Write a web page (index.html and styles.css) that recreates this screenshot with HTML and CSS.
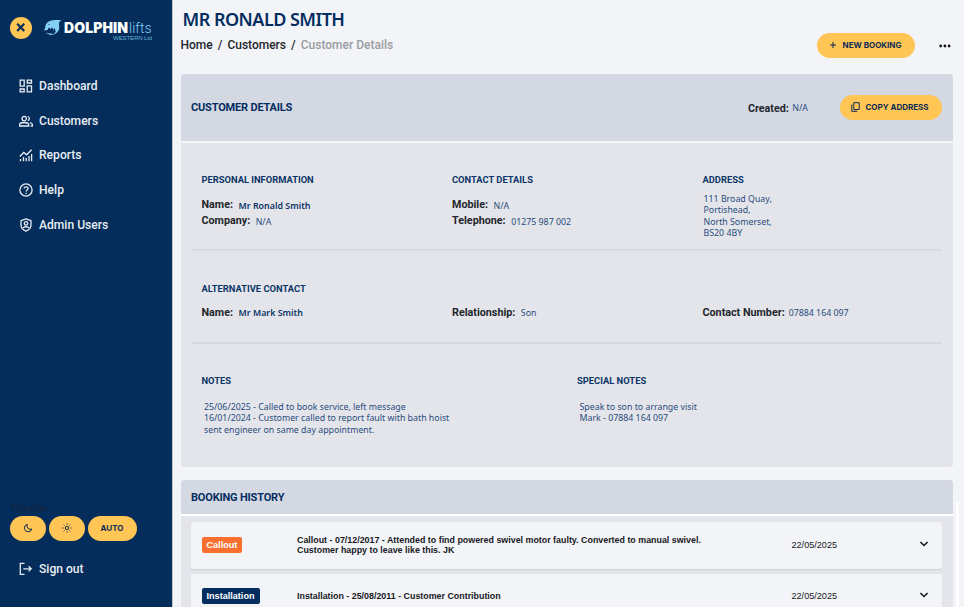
FILE: index.html
```html
<!DOCTYPE html>
<html lang="en">
<head>
<meta charset="utf-8">
<title>Mr Ronald Smith</title>
<link rel="stylesheet" href="styles.css">
</head>
<body>
<div class="app">
  <aside class="sidebar">
    <div class="brand">
      <button class="close" aria-label="Close menu"><svg viewBox="0 0 22 22"><path d="M7.200 6.700l7 7.200M14.200 6.700l-7 7.200"/></svg></button>
      <svg class="dolphin" viewBox="0 0 18 16"><path fill="#83cff5" d="M17.300.3C13-.2 8.300 0 4.700 1.500 2.200 2.800 1.200 5.500 1.200 7.700L0 10.500l3.400-.5c2.500-.3 3.800-1.100 4.800-2.300 2.500 1.900 1.400 4.700-1.200 5.500-1.900.6-3.700.1-5-.6 1.800 2.300 5 2.900 7.800 2 4.500-1.400 6.300-5.800 5.200-9.800-.3-1.600 0-2.900 2.300-4.500z"/><path fill="#04305f" d="M4 8.200l2.500-.6-1 1.400 3-.8.4 3 1.700-3.200 1.100 3.600c-.7 2-2.800 3-4.500 2.500l1-2.300-1.900 1-.1-2.300-2.500.6z"/><circle cx="5" cy="4.500" r=".6" fill="#04305f"/></svg>
      <div class="wordmark"><div class="name"><b>DOLPHIN</b><span>lifts</span></div><div class="region">WESTERN Ltd</div></div>
    </div>
    <nav class="nav">
      <a><svg viewBox="0 0 14 14"><path d="M1.200 1.200h4v6h-4zM1.200 10h4v2.800h-4zM8.200 1.200h4.300V4H8.200zM8.200 6.800h4.300v6H8.200z"/></svg>Dashboard</a>
      <a><svg viewBox="0 0 14 14"><circle cx="5.200" cy="4.600" r="2.200"/><path d="M.6 12v-1.200c0-1.600 2.300-2.300 4.600-2.300s4.600.7 4.600 2.300V12zM8.800 2.500a2.200 2.200 0 0 1 0 4.200M11 8.700c1.500.4 2.400 1.100 2.400 2.100V12h-1.600"/></svg>Customers</a>
      <a><svg viewBox="0 0 14 14"><path d="M1.500 11v2.300M4.500 9v4.300M7.200 10v3.300M10 8v5.300M12.600 6v7.300M.8 8.500l4-4 2.800 2.300 5-5"/></svg>Reports</a>
      <a><svg viewBox="0 0 14 14"><circle cx="7" cy="7" r="6.100"/><path d="M5.100 5.600c0-2.400 3.900-2.300 3.900 0C9 7 7.100 7 7.100 8.600M7.100 9.700v1.200"/></svg>Help</a>
      <a><svg viewBox="0 0 14 14"><path d="M7 .9l5 1.700v4c0 3-2 5.500-5 6.500-3-1-5-3.500-5-6.500v-4z"/><circle cx="7" cy="5.400" r="1.700"/><path d="M4 10c1-1.700 5-1.700 6 0"/></svg>Admin Users</a>
    </nav>
    <div class="bottom">
      <div class="theme-label">Theme:</div>
      <div class="themes">
        <button class="pill icon"><svg viewBox="0 0 10 10"><path d="M4.300 1.300A3.800 3.800 0 1 0 8.900 6 3.500 3.500 0 0 1 4.300 1.300z"/></svg></button>
        <button class="pill icon"><svg viewBox="0 0 10 10"><circle cx="5" cy="5" r="1.700"/><path d="M5 .3v1.200M5 8.500v1.200M.3 5h1.200M8.500 5h1.200M1.700 1.700l.8.800M7.500 7.500l.8.800M1.700 8.300l.8-.8M7.500 2.500l.8-.8"/></svg></button>
        <button class="pill auto">AUTO</button>
      </div>
      <a class="signout"><svg viewBox="0 0 14 14"><path d="M5.500 1.300H1.300v11h4.200M4.300 6.800H12M9.600 4.200l2.600 2.600-2.600 2.600"/></svg>Sign out</a>
    </div>
  </aside>
  <main class="main">
    <header class="page-head">
      <div class="heading">
        <h1>MR RONALD SMITH</h1>
        <div class="crumbs"><a>Home</a><i>/</i><a>Customers</a><i>/</i><span>Customer Details</span></div>
      </div>
      <button class="pill new"><svg viewBox="0 0 8 8"><path d="M4 1v6M1 4h6"/></svg>NEW BOOKING</button>
      <svg class="more" viewBox="0 0 12 4"><circle cx="1.700" cy="2" r="1.400"/><circle cx="5.900" cy="2" r="1.400"/><circle cx="10.100" cy="2" r="1.400"/></svg>
    </header>
    <section class="card details">
      <div class="card-head">
        <h2>CUSTOMER DETAILS</h2>
        <div class="created"><b>Created:</b><span>N/A</span></div>
        <button class="pill copy"><svg viewBox="0 0 9 10"><path d="M2.800.7h5.400v6.800H2.800zM.8 2.500v6.800h5.400"/></svg>COPY ADDRESS</button>
      </div>
      <div class="card-body">
        <div class="group thirds personal">
          <div><h3>PERSONAL INFORMATION</h3>
            <p class="kv low"><b>Name:</b><strong>Mr Ronald Smith</strong></p>
            <p class="kv low"><b>Company:</b><span>N/A</span></p></div>
          <div><h3>CONTACT DETAILS</h3>
            <p class="kv low"><b>Mobile:</b><span>N/A</span></p>
            <p class="kv low"><b>Telephone:</b><span>01275 987 002</span></p></div>
          <div><h3>ADDRESS</h3>
            <address>111 Broad Quay,<br>Portishead,<br>North Somerset,<br>BS20 4BY</address></div>
        </div>
        <div class="group thirds alternative">
          <div><h3>ALTERNATIVE CONTACT</h3><p class="kv"><b>Name:</b><strong>Mr Mark Smith</strong></p></div>
          <div><p class="kv"><b>Relationship:</b><span>Son</span></p></div>
          <div><p class="kv tight"><b>Contact Number:</b><span>07884 164 097</span></p></div>
        </div>
        <div class="group halves">
          <div><h3>NOTES</h3><p class="note">25/06/2025 - Called to book service, left message<br>16/01/2024 - Customer called to report fault with bath hoist<br>sent engineer on same day appointment.</p></div>
          <div><h3>SPECIAL NOTES</h3><p class="note">Speak to son to arrange visit<br>Mark - 07884 164 097</p></div>
        </div>
      </div>
    </section>
    <section class="card history">
      <div class="card-head"><h2>BOOKING HISTORY</h2></div>
      <div class="rows">
        <div class="row"><div><span class="tag callout">Callout</span></div><p>Callout - 07/12/2017 - Attended to find powered swivel motor faulty. Converted to manual swivel.<br>Customer happy to leave like this. JK</p><time>22/05/2025</time><svg viewBox="0 0 10 8"><path d="M1.400 2l3.600 3.500L8.600 2"/></svg></div>
        <div class="row"><div><span class="tag install">Installation</span></div><p>Installation - 25/08/2011 - Customer Contribution</p><time>22/05/2025</time><svg viewBox="0 0 10 8"><path d="M1.400 2l3.600 3.500L8.600 2"/></svg></div>
      </div>
    </section>
  </main>
  <div class="scroll-thumb"></div>
</div>
</body>
</html>
```
FILE: styles.css
```css
* { box-sizing: border-box; }
body { margin: 0; background: #f3f4f8; font-family: Roboto, "Liberation Sans", sans-serif; overflow: hidden; }
h1, h2, h3, p { margin: 0; }
button { border: 0; padding: 0; font: inherit; }
svg { fill: none; stroke: currentColor; flex: none; }
.app { display: flex; height: 607px; position: relative; overflow: hidden; white-space: nowrap; }

.sidebar { width: 173px; flex: none; background: #042d5b; border-right: 1px solid #bdc4d1; color: #e9edf3; display: flex; flex-direction: column; }
.brand { display: flex; padding: 17px 0 0 10px; height: 68.600px; }
.close { width: 22px; height: 22px; border-radius: 50%; background: #ffc555; color: #042d5b; }
.close svg { display: block; stroke-width: 2.200; }
.dolphin { width: 18px; height: 16px; margin: 3px 0 0 12px; stroke: none; }
.wordmark { margin: 3px 0 0 2px; width: 88px; }
.name { display: flex; height: 14px; line-height: 16px; }
.name b { width: 65px; font-family: Inter, sans-serif; font-weight: 900; font-size: 14px; letter-spacing: .1px; color: #fff; }
.name span { color: #83cff5; font-weight: 300; font-size: 14px; }
.region { color: #83cff5; font: 300 6px/6px "Liberation Sans", sans-serif; text-align: right; letter-spacing: -.1px; margin-top: 1px; opacity: .8; }
.nav a, .signout { display: flex; align-items: center; gap: 6px; height: 34.700px; padding-left: 19px; font-weight: 500; font-size: 12.100px; }
.nav svg, .signout svg { width: 14px; height: 14px; stroke-width: 1.300; }
.bottom { margin-top: auto; height: 105px; }
.theme-label { height: 14px; padding-left: 10px; font-size: 11px; line-height: 13px; color: #15233c; letter-spacing: .5px; }
.themes { display: flex; gap: 3px; padding-left: 10px; }
.pill { display: flex; align-items: center; justify-content: center; height: 25px; border-radius: 13px; background: #ffc555; color: #0b2b55; font-family: Inter, sans-serif; font-weight: 700; font-size: 8px; }
.pill.icon { width: 36px; padding-bottom: 1px; }
.pill.icon svg { width: 10px; height: 10px; stroke-width: 1; }
.pill.auto { width: 49px; padding: 0 1px 1px 0; }
.signout { margin-top: 10.600px; }

.main { width: 780px; padding-left: 7.500px; }
.page-head { height: 74px; display: flex; align-items: flex-start; }
.heading { width: 636px; }
h1 { font: 600 18px/24px "Noto Sans", sans-serif; letter-spacing: -.530px; color: #042d5f; padding: 7px 0 0 2px; }
.crumbs { margin-top: 5.600px; font-size: 12px; line-height: 17px; font-weight: 500; color: #22262b; }
.crumbs i { margin: 0 5px; font-style: normal; }
.crumbs span { color: #999ca1; }
.new { width: 98px; margin-top: 32.500px; gap: 6px; padding: 0 1px 1px 0; }
.new svg { width: 8px; height: 8px; stroke-width: 1; }
.more { width: 12px; height: 4px; margin: 43.500px 0 0 24.500px; fill: #15171b; stroke: none; }

.card { width: 772.500px; }
.card-head { background: #d3d8e3; display: flex; align-items: center; padding-left: 10.500px; border-radius: 3px 3px 0 0; }
h2 { font-size: 11px; line-height: 14px; font-weight: 700; letter-spacing: -.180px; color: #042d5f; padding-top: 1px; }
.details .card-head { height: 67px; }
.details h2 { flex: 1; }
.created { display: flex; align-items: center; gap: 3.500px; width: 92px; font-size: 10.700px; padding-top: 1px; color: #22262b; }
.created span, .kv span, .kv strong, address, .note { font-family: "Noto Sans", sans-serif; font-size: 8.800px; color: #284c7c; font-style: normal; }
.kv strong { font-size: 8.900px; font-weight: 600; color: #0b3568; }
.copy { width: 102px; margin-right: 11px; gap: 5px; padding: 0 2px 1px 0; }
.copy svg { width: 9px; height: 10px; stroke-width: 1; }
.card-body { margin-top: 2px; height: 324px; background: #e4e5ea; border-radius: 0 0 3px 3px; padding: 0 11px 0 10.500px; }
.group { padding-left: 10.500px; display: grid; }
.thirds { grid-template-columns: 250.500px 250.500px 1fr; border-bottom: 2px solid #d8dadf; }
.halves { grid-template-columns: 375.500px 1fr; padding-top: 30.400px; }
.personal { height: 108px; padding-top: 30.400px; }
.alternative { height: 93px; align-items: end; padding-bottom: 21px; }
h3 { font-size: 9.350px; line-height: 13px; font-weight: 700; color: #0b3568; }
.personal h3 { margin-bottom: 10.600px; }
.alternative h3 { margin-bottom: 10.100px; }
.kv { display: flex; align-items: center; gap: 5.500px; height: 16px; font-size: 10.750px; line-height: 16px; color: #22262b; }
.kv.tight { gap: 4px; }
.kv span, .kv strong { margin-top: -1px; }
.low span, .low strong { margin-top: 2px; }
address { line-height: 11.300px; margin-top: -3px; padding-left: 1px; }
.note { line-height: 11.500px; margin-top: 14.500px; padding-left: 2.500px; }

.history { margin-top: 13px; }
.history .card-head { height: 34px; }
.rows { border-top: 2px solid #fff; background: #e4e5ea; height: 120px; padding: 6px 11px 0 10.500px; display: flex; flex-direction: column; gap: 5px; }
.row { flex: none; height: 47px; padding-bottom: 2px; display: grid; grid-template-columns: 95.500px 494.500px 127px 10px; padding-left: 10.500px; align-items: center; background: #f3f4f8; border-radius: 2px; box-shadow: 0 1px 1px #c9ccd4; font-family: "Liberation Sans", sans-serif; }
.row + .row { height: 45px; }
.row p { font-size: 8.900px; line-height: 10px; font-weight: 700; color: #17191d; }
.row time { font-size: 9.100px; color: #17191d; }
.row svg { width: 10px; height: 8px; margin-top: -1px; color: #17191d; stroke-width: 1.600; }
.tag { display: block; width: max-content; height: 16px; line-height: 16px; padding: 0 5px; border-radius: 2px; color: #fff; font-size: 9.100px; font-weight: 700; }
.callout { background: #f96f30; }
.install { background: #042d5f; }
.scroll-thumb { position: absolute; right: 5px; top: 502px; width: 3px; height: 105px; background: #fff; }
```
